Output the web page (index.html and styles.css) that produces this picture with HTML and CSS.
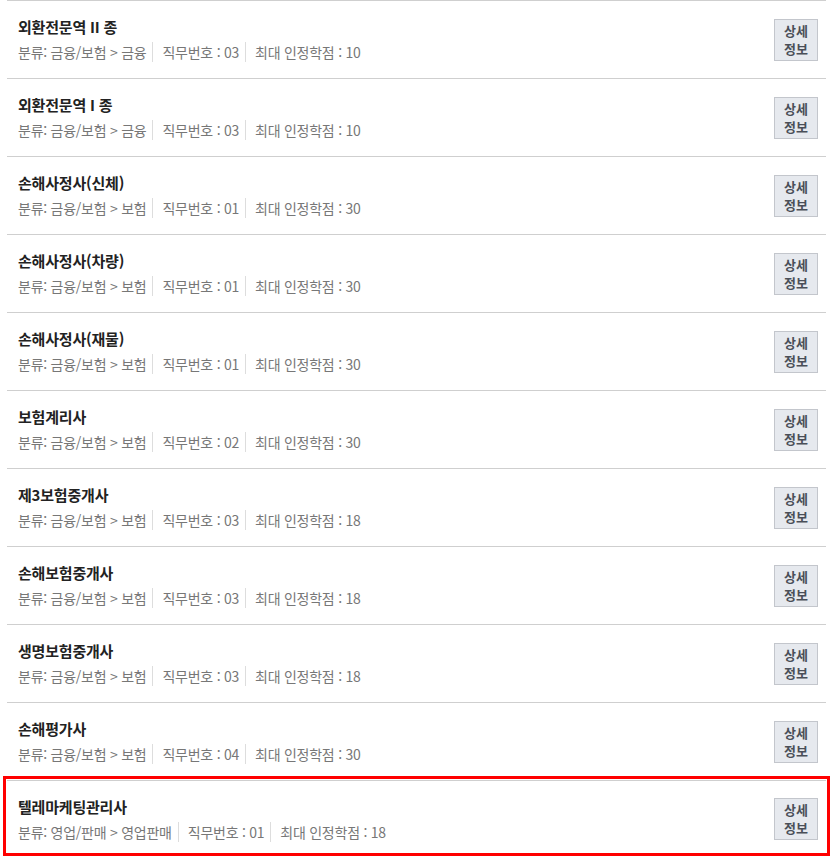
FILE: index.html
```html
<!DOCTYPE html>
<html lang="ko">
<head>
<meta charset="utf-8">
<link rel="stylesheet" href="styles.css">
</head>
<body>
<ul class="list">
  <li class="item">
    <div class="info">
      <div class="title">외환전문역 II 종</div>
      <div class="meta"><span>분류: 금융/보험 &gt; 금융</span><span>직무번호 : 03</span><span>최대 인정학점 : 10</span></div>
    </div>
    <button class="btn">상세<br>정보</button>
  </li>
  <li class="item">
    <div class="info">
      <div class="title">외환전문역 I 종</div>
      <div class="meta"><span>분류: 금융/보험 &gt; 금융</span><span>직무번호 : 03</span><span>최대 인정학점 : 10</span></div>
    </div>
    <button class="btn">상세<br>정보</button>
  </li>
  <li class="item">
    <div class="info">
      <div class="title">손해사정사(신체)</div>
      <div class="meta"><span>분류: 금융/보험 &gt; 보험</span><span>직무번호 : 01</span><span>최대 인정학점 : 30</span></div>
    </div>
    <button class="btn">상세<br>정보</button>
  </li>
  <li class="item">
    <div class="info">
      <div class="title">손해사정사(차량)</div>
      <div class="meta"><span>분류: 금융/보험 &gt; 보험</span><span>직무번호 : 01</span><span>최대 인정학점 : 30</span></div>
    </div>
    <button class="btn">상세<br>정보</button>
  </li>
  <li class="item">
    <div class="info">
      <div class="title">손해사정사(재물)</div>
      <div class="meta"><span>분류: 금융/보험 &gt; 보험</span><span>직무번호 : 01</span><span>최대 인정학점 : 30</span></div>
    </div>
    <button class="btn">상세<br>정보</button>
  </li>
  <li class="item">
    <div class="info">
      <div class="title">보험계리사</div>
      <div class="meta"><span>분류: 금융/보험 &gt; 보험</span><span>직무번호 : 02</span><span>최대 인정학점 : 30</span></div>
    </div>
    <button class="btn">상세<br>정보</button>
  </li>
  <li class="item">
    <div class="info">
      <div class="title">제3보험중개사</div>
      <div class="meta"><span>분류: 금융/보험 &gt; 보험</span><span>직무번호 : 03</span><span>최대 인정학점 : 18</span></div>
    </div>
    <button class="btn">상세<br>정보</button>
  </li>
  <li class="item">
    <div class="info">
      <div class="title">손해보험중개사</div>
      <div class="meta"><span>분류: 금융/보험 &gt; 보험</span><span>직무번호 : 03</span><span>최대 인정학점 : 18</span></div>
    </div>
    <button class="btn">상세<br>정보</button>
  </li>
  <li class="item">
    <div class="info">
      <div class="title">생명보험중개사</div>
      <div class="meta"><span>분류: 금융/보험 &gt; 보험</span><span>직무번호 : 03</span><span>최대 인정학점 : 18</span></div>
    </div>
    <button class="btn">상세<br>정보</button>
  </li>
  <li class="item">
    <div class="info">
      <div class="title">손해평가사</div>
      <div class="meta"><span>분류: 금융/보험 &gt; 보험</span><span>직무번호 : 04</span><span>최대 인정학점 : 30</span></div>
    </div>
    <button class="btn">상세<br>정보</button>
  </li>
  <li class="item selected">
    <div class="info">
      <div class="title">텔레마케팅관리사</div>
      <div class="meta"><span>분류: 영업/판매 &gt; 영업판매</span><span>직무번호 : 01</span><span>최대 인정학점 : 18</span></div>
    </div>
    <button class="btn">상세<br>정보</button>
  </li>
</ul>
</body>
</html>
```

FILE: styles.css
```css
html, body {
  margin: 0;
  padding: 0;
  background: #fff;
}
body {
  font-family: "Noto Sans CJK KR", "Noto Sans", sans-serif;
  padding: 0 4px 6px 7px;
}
.list {
  list-style: none;
  margin: 0;
  padding: 0;
}
.item {
  display: flex;
  align-items: center;
  justify-content: space-between;
  height: 77px;
  border-top: 1px solid #cfcfcf;
  padding: 0 8px 0 11px;
  box-sizing: content-box;
}
.item.selected {
  height: 66px;
  padding-top: 5px;
  outline: 3px solid #f00;
  outline-offset: 1px;
}
.info {
  display: flex;
  flex-direction: column;
  gap: 4px;
  padding-bottom: 1px;
}
.title {
  font-size: 15px;
  font-weight: 700;
  color: #222;
  line-height: 22px;
  letter-spacing: -0.2px;
}
.meta {
  display: flex;
  font-size: 14px;
  color: #777;
  line-height: 20px;
  letter-spacing: -0.25px;
}
.meta span + span {
  border-left: 1px solid #ddd;
  margin-left: 6px;
  padding-left: 9px;
}
.btn {
  width: 44px;
  height: 42px;
  padding: 0;
  margin: 0;
  background: #e6e9ee;
  border: 1px solid #c3c6cc;
  border-radius: 0;
  font-family: "Noto Sans CJK KR", sans-serif;
  font-size: 13px;
  font-weight: 700;
  line-height: 18px;
  color: #4a4f58;
}
```
